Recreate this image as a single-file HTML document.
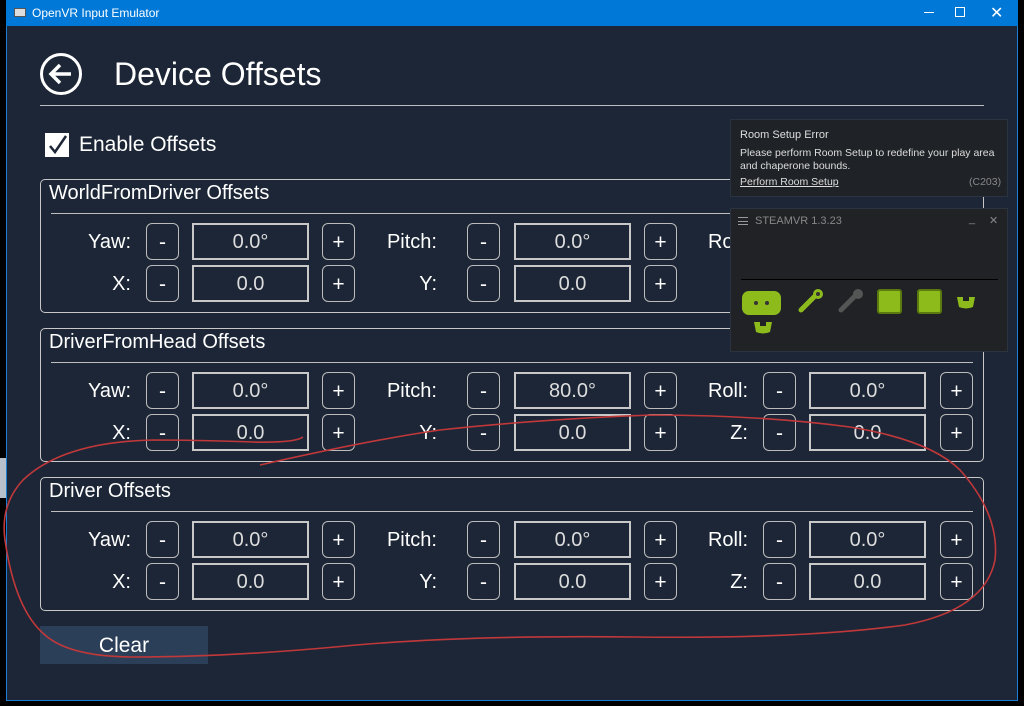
<!DOCTYPE html>
<html><head><meta charset="utf-8"><style>
*{margin:0;padding:0;box-sizing:border-box}
body{width:1024px;height:706px;background:#000;position:relative;overflow:hidden;font-family:"Liberation Sans",sans-serif;color:#fff}
.abs{position:absolute}
#win{left:6px;top:0;width:1012px;height:701px;background:#1c2636;border:1px solid #1a7fd4}
#tb{left:6px;top:0;width:1012px;height:26px;background:#0078d7;font-size:12px}
.grp{position:absolute;left:40px;width:944px;height:134px;border:1px solid #c8c8c8;border-radius:5px}
.grp .t{position:absolute;left:8px;top:2px;font-size:20px}
.grp .ln{position:absolute;left:10px;right:10px;top:33px;height:1px;background:#bfbfbf}
.btn{position:absolute;width:33px;height:37px;border:1px solid #bcbcbc;border-radius:6px;text-align:center;line-height:37px;font-size:21px}
.fld{position:absolute;width:117px;height:37px;border:2px solid #c8c8c8;text-align:center;line-height:35px;font-size:20px;color:#ddd}
.lbl{position:absolute;font-size:20px;text-align:right;width:100px;line-height:39px}
</style></head><body>
<div id="win" class="abs"></div>
<div id="tb" class="abs">
 <div class="abs" style="left:8px;top:8px;width:12px;height:9px;background:#ddd;border:1px solid #555"></div>
 <div class="abs" style="left:26px;top:6px">OpenVR Input Emulator</div>
 <div class="abs" style="left:918px;top:12px;width:10px;height:1px;background:#fff"></div>
 <div class="abs" style="left:949px;top:7px;width:10px;height:10px;border:1px solid #fff"></div>
 <div class="abs" style="left:984px;top:3px;font-size:16px">✕</div>
</div>
<svg class="abs" style="left:38px;top:51px" width="48" height="48"><circle cx="23" cy="23" r="19.5" fill="none" stroke="#fff" stroke-width="3"/><path d="M33 23H14M22 14l-9 9 9 9" fill="none" stroke="#fff" stroke-width="3.5"/></svg>
<div class="abs" style="left:114px;top:56px;font-size:32px">Device Offsets</div>
<div class="abs" style="left:40px;top:105px;width:944px;height:1px;background:#bfbfbf"></div>
<div class="abs" style="left:45px;top:133px;width:24px;height:24px;background:#fff"></div>
<svg class="abs" style="left:45px;top:133px" width="24" height="24"><path d="M5 13l5 6L21 3" fill="none" stroke="#1c2636" stroke-width="2.5"/></svg>
<div class="abs" style="left:79px;top:133px;font-size:21px">Enable Offsets</div>

<div class="grp" style="top:179px"><div class="t">WorldFromDriver Offsets</div><div class="ln"></div></div>
<div class="grp" style="top:328px"><div class="t">DriverFromHead Offsets</div><div class="ln"></div></div>
<div class="grp" style="top:477px"><div class="t">Driver Offsets</div><div class="ln"></div></div>

<div id="rows"></div>
<script>
var tops=[223,372,521];var vals=[["0.0°","0.0°","0.0°"],["0.0°","80.0°","0.0°"],["0.0°","0.0°","0.0°"]];
var cols=[{lx:31,m:146,f:192,p:322},{lx:337,m:467,f:514,p:644},{lx:648,m:763,f:809,p:940}];
var l1=["Yaw:","Pitch:","Roll:"],l2=["X:","Y:","Z:"];var h="";
tops.forEach(function(t,gi){[0,1].forEach(function(r){var y=t+r*42;cols.forEach(function(c,ci){
h+='<div class="lbl" style="left:'+c.lx+'px;top:'+y+'px">'+(r?l2[ci]:l1[ci])+'</div>';
h+='<div class="btn" style="left:'+c.m+'px;top:'+y+'px">-</div>';
h+='<div class="fld" style="left:'+c.f+'px;top:'+y+'px">'+(r?"0.0":vals[gi][ci])+'</div>';
h+='<div class="btn" style="left:'+c.p+'px;top:'+y+'px">+</div>';});});});
document.getElementById("rows").innerHTML=h;
</script>
<div class="abs" style="left:40px;top:626px;width:168px;height:38px;background:#2c3f58;text-align:center;line-height:40px;font-size:21px">Clear</div>

<div class="abs" style="left:0;top:458px;width:6px;height:40px;background:#b8c0cc"></div>

<div class="abs" style="left:730px;top:119px;width:278px;height:78px;background:#1f2226;border:1px solid #2a3440;font-size:11px;color:#ddd">
 <div class="abs" style="left:9px;top:9px">Room Setup Error</div>
 <div class="abs" style="left:9px;top:27px;line-height:13px;font-size:10.5px">Please perform Room Setup to redefine your play area<br>and chaperone bounds.</div>
 <div class="abs" style="left:9px;top:56px;text-decoration:underline;font-size:10.5px">Perform Room Setup</div>
 <div class="abs" style="left:238px;top:56px;color:#888;font-size:10.5px">(C203)</div>
</div>
<div class="abs" style="left:730px;top:208px;width:278px;height:144px;background:#202226;border:1px solid #2a3440;font-size:11px;color:#888">
 <div class="abs" style="left:7px;top:8px;width:10px;height:8px;border-top:1px solid #999;border-bottom:1px solid #999"></div><div class="abs" style="left:7px;top:12px;width:10px;height:1px;background:#999"></div>
 <div class="abs" style="left:24px;top:6px">STEAMVR 1.3.23</div>
 <div class="abs" style="left:238px;top:4px">_</div><div class="abs" style="left:258px;top:5px">✕</div>
 <div class="abs" style="left:10px;top:70px;width:257px;height:1px;background:#000"></div>
 <svg class="abs" style="left:10px;top:78px" width="260" height="56">
  <rect x="1" y="4" width="39" height="24" rx="7" fill="#8dbb1c"/><circle cx="15" cy="16" r="2" fill="#333"/><circle cx="26" cy="16" r="2" fill="#333"/>
  <path d="M60 23l17-17" stroke="#8dbb1c" stroke-width="5" stroke-linecap="round"/><circle cx="77" cy="7" r="5" fill="#8dbb1c"/><circle cx="77" cy="7" r="2" fill="#333"/>
  <path d="M100 23l17-17" stroke="#555" stroke-width="5" stroke-linecap="round"/><circle cx="117" cy="7" r="5" fill="#555"/>
  <rect x="137" y="3" width="23" height="23" rx="2" fill="#8dbb1c" stroke="#5a7a10" stroke-width="2"/>
  <rect x="177" y="3" width="23" height="23" rx="2" fill="#8dbb1c" stroke="#5a7a10" stroke-width="2"/>
  <path d="M216 10h6v4h6v-4h6l-2 10q-7 3-14 0z" fill="#8dbb1c"/>
  <path d="M13 35h6v4h6v-4h6l-2 10q-7 3-14 0z" fill="#8dbb1c"/>
 </svg>
</div>

<svg class="abs" style="left:0;top:0" width="1024" height="706" fill="none" stroke="#c0383a" stroke-width="1.6">
 <path d="M303 437q-8 6-50 5q-60-2-100-2q-90 2-130 40Q0 505 5 540q10 70 40 95q25 22 90 22q90 0 200-10q120-12 300-10q170 2 270-12q80-15 90-65q5-45-35-90q-30-30-110-43q-90-12-200-12q-120 5-210 15q-70 10-180 35"/>
</svg>
</body></html>
